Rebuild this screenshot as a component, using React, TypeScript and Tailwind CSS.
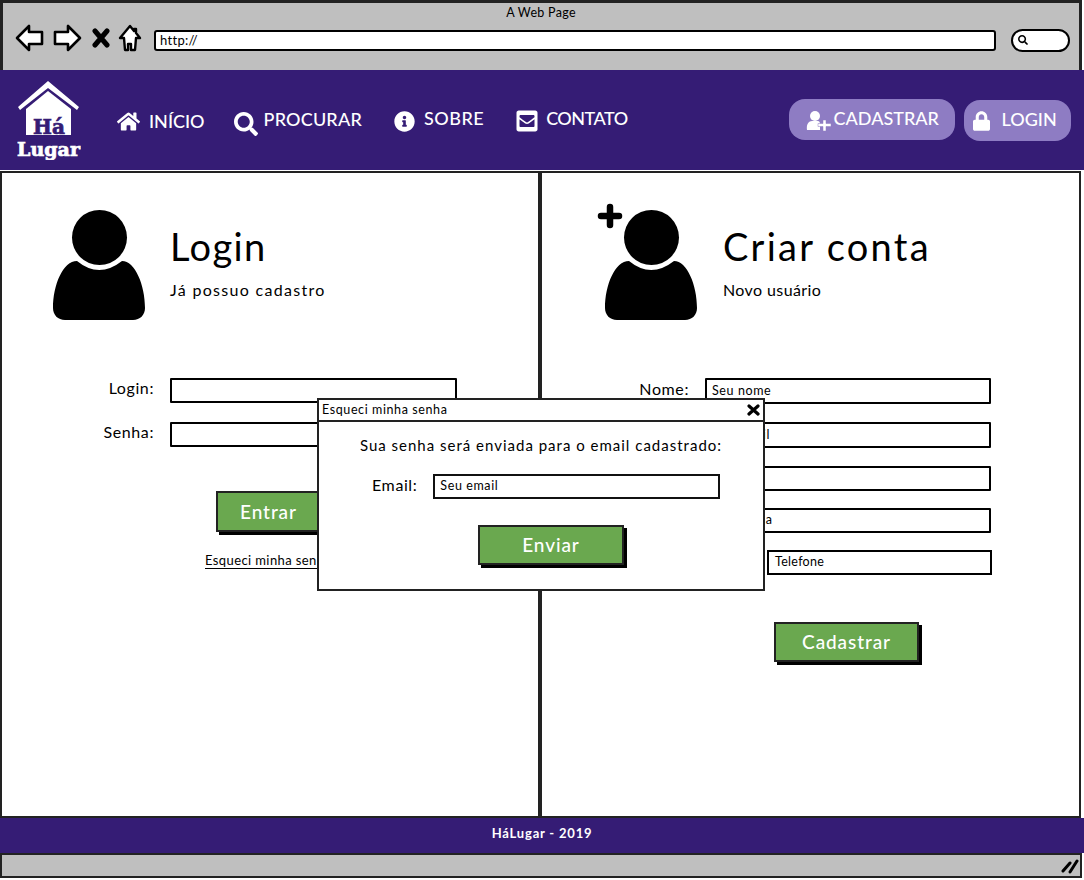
import { FaHome, FaSearch, FaInfoCircle, FaEnvelopeSquare, FaLock } from "react-icons/fa";

const font = "font-['Lato','Noto_Sans',sans-serif]";

function Person() {
  return (
    <svg width="92" height="110" viewBox="0 0 92 110" className="block">
      <circle cx="46.5" cy="27.5" r="27.5" fill="#000" />
      <path d="M24 51 Q46 69 69 51 C82 51 92 75 92 98 C92 105 87 110 80 110 L12 110 C5 110 0 105 0 98 C0 75 10 51 24 51 Z" fill="#000" />
    </svg>
  );
}

function Field({ label, placeholder, labelW, inputW, h = "h-[26px]", mt = "" }: { label?: string; placeholder?: string; labelW: string; inputW: string; h?: string; mt?: string }) {
  return (
    <div className={`flex items-center ${mt}`}>
      <div className={`${labelW} -mt-[5px] text-right text-[16px] leading-5 tracking-[0.6px] text-black`}>{label}</div>
      <div className={`ml-4 ${inputW} ${h} flex items-center border-2 border-black rounded-[1px] bg-white pl-[5px] text-[12.5px] tracking-[0.6px] text-black`}>{placeholder}</div>
    </div>
  );
}

function GreenButton({ children, cls }: { children: string; cls: string }) {
  return (
    <div className={`${cls} flex items-center justify-center border-2 border-[#222] bg-[#6aa84f] text-[19px] font-medium tracking-[0.9px] text-white shadow-[3px_3px_0_#000]`}>{children}</div>
  );
}

function NavItem({ icon, label, cls, textCls = "" }: { icon: React.ReactNode; label: string; cls: string; textCls?: string }) {
  return (
    <div className={`flex items-center text-[18px] font-medium text-white ${cls}`}>
      {icon}
      <span className={textCls}>{label}</span>
    </div>
  );
}

export default function App() {
  return (
    <div className={`relative h-[880px] w-[1084px] overflow-hidden bg-white ${font} text-black`}>
      {/* browser chrome */}
      <div className="h-[70px] w-[1082px] border-[3px] border-b-0 border-[#222] bg-[#bfbfbf]">
        <div className="pt-[2px] text-center text-[12.5px] leading-4 tracking-[0.3px]">A Web Page</div>
        <div className="mt-[3px] flex items-center pl-[12px]">
          <svg width="30" height="28" viewBox="0 0 30 28" fill="none" stroke="#000" strokeWidth="2.6" strokeLinejoin="round">
            <path d="M2 14 L14 2 L14 8 L27 8 L27 20 L14 20 L14 26 Z" fill="#fff" />
          </svg>
          <svg className="ml-[7px]" width="30" height="28" viewBox="0 0 30 28" fill="none" stroke="#000" strokeWidth="2.6" strokeLinejoin="round">
            <path d="M28 14 L16 2 L16 8 L3 8 L3 20 L16 20 L16 26 Z" fill="#fff" />
          </svg>
          <svg className="ml-[10px]" width="18" height="20" viewBox="0 0 18 20" fill="none" stroke="#000" strokeWidth="5" strokeLinecap="round">
            <path d="M3 3 L15 17 M15 3 L3 17" />
          </svg>
          <svg className="ml-[8px]" width="24" height="28" viewBox="0 0 24 28" fill="#fff" stroke="#000" strokeWidth="2.4" strokeLinejoin="round">
            <path d="M12 2 L16 7 L16 5 L18 5 L18 9 L22 14 L18 14 L17 26 L13 26 L13 20 L10 20 L10 26 L7 26 L6 14 L2 14 Z" />
          </svg>
          <div className="ml-[12px] mt-[5px] flex h-[21px] w-[842px] items-center rounded-[3px] border-2 border-black bg-white pl-[4px] text-[13px] leading-none tracking-[0.3px]">http://</div>
          <div className="ml-[15px] mt-[4px] flex h-[23px] w-[59px] items-center rounded-full border-2 border-black bg-white pl-[5px]">
            <FaSearch className="h-[10px] w-[10px]" />
          </div>
        </div>
      </div>

      {/* header */}
      <div className="flex h-[100px] w-[1084px] items-start bg-[#351c75]">
        <svg className="ml-[17px] mt-[10px] shrink-0" width="64" height="80" viewBox="0 0 64 80">
          <path d="M1 27 L31 1 L62 27 L60 30 L31 8 L3 30 Z" fill="#fff" />
          <path d="M9 29 L31 11 L54 29 L54 55 L9 55 Z" fill="#fff" />
          <text x="32" y="54" textAnchor="middle" fontFamily="'DejaVu Serif','Liberation Serif',serif" fontWeight="900" fontSize="20" fill="#351c75" stroke="#351c75" strokeWidth="0.7">Há</text>
          <text x="31.5" y="76" textAnchor="middle" fontFamily="'DejaVu Serif','Liberation Serif',serif" fontWeight="900" fontSize="19" fill="#fff" stroke="#fff" strokeWidth="0.7">Lugar</text>
        </svg>
        <NavItem cls="ml-[36px] mt-[38px]" icon={<FaHome className="mr-[9px] h-[21px] w-[23px]" />} label="INÍCIO" />
        <NavItem cls="ml-[29px] mt-[33px]" icon={<FaSearch className="mr-[6px] mt-[9px] h-[24px] w-[24px]" />} label="PROCURAR" textCls="tracking-[0.2px]" />
        <NavItem cls="ml-[32px] mt-[35px]" icon={<FaInfoCircle className="mr-[9px] mt-[5px] h-[21px] w-[21px]" />} label="SOBRE" textCls="tracking-[0.5px]" />
        <NavItem cls="ml-[32px] mt-[33px]" icon={<FaEnvelopeSquare className="mr-[8px] mt-[6px] h-[24px] w-[22px]" />} label="CONTATO" textCls="tracking-[-0.5px]" />
        <div className="ml-[161px] mt-[29px] flex h-[41px] w-[166px] items-center rounded-[16px] bg-[#8e7cc3] pl-[17px] text-[18px] font-medium text-white">
          <svg width="25" height="20" viewBox="0 0 25 20" fill="#fff" className="mr-[3px] mt-[3px]">
            <circle cx="9" cy="5" r="5" />
            <path d="M1 19 C0 13 3 10 6 10 L12 10 C13 10 14 11 14 13 L14 19 Z" />
            <path d="M17 9 H20 V12.5 H25 V15.5 H20 V20 H17 V15.5 H12 V12.5 H17 Z" stroke="#8e7cc3" strokeWidth="0.5" />
          </svg>
          <span className="-mt-[3px]">CADASTRAR</span>
        </div>
        <div className="ml-[9px] mt-[30px] flex h-[41px] w-[107px] items-center rounded-[16px] bg-[#8e7cc3] pl-[9px] text-[18px] font-medium text-white">
          <FaLock className="mr-[12px] h-[20px] w-[17px]" />
          <span className="-mt-[3px]">LOGIN</span>
        </div>
      </div>

      {/* panels */}
      <div className="mt-px flex h-[647px] w-[1081px]">
        <div className="h-full w-[540px] border-2 border-[#222] pl-[51px] pt-[37px]">
          <div className="flex">
            <Person />
            <div className="ml-[25px] pt-[12px]">
              <div className="text-[38px] leading-[48px] tracking-[1.4px]">Login</div>
              <div className="mt-[10px] text-[16px] leading-5 tracking-[1.3px]">Já possuo cadastro</div>
            </div>
          </div>
          <Field mt="mt-[58px]" label="Login:" labelW="w-[101px]" inputW="w-[287px]" h="h-[25px]" />
          <Field mt="mt-[19px]" label="Senha:" labelW="w-[101px]" inputW="w-[287px]" h="h-[25px]" />
          <GreenButton cls="ml-[163px] mt-[44px] h-[41px] w-[105px] pt-[1px]">Entrar</GreenButton>
          <div className="ml-[152px] mt-[20px] w-[170px] border-b border-black text-[13px] leading-[16px] tracking-[0.4px] whitespace-nowrap">Esqueci minha senha</div>
        </div>
        <div className="h-full w-[541px] border-2 border-[#222] pl-[63px] pt-[37px]">
          <div className="flex">
            <div className="relative">
              <Person />
              <svg className="absolute -left-[8px] -top-[7px]" width="26" height="26" viewBox="0 0 26 26" stroke="#000" strokeWidth="6.5" strokeLinecap="round">
                <path d="M13 4 V22 M4 13 H22" />
              </svg>
            </div>
            <div className="ml-[26px] pt-[12px]">
              <div className="text-[38px] leading-[48px] tracking-[2.3px]">Criar conta</div>
              <div className="mt-[10px] text-[16px] leading-5 tracking-[0.4px]">Novo usuário</div>
            </div>
          </div>
          <Field mt="mt-[58px]" label="Nome:" placeholder="Seu nome" labelW="w-[84px]" inputW="w-[286px]" />
          <Field mt="mt-[18px]" placeholder="Seu email" labelW="w-[84px]" inputW="w-[286px]" />
          <Field mt="mt-[18px]" labelW="w-[84px]" inputW="w-[286px]" h="h-[25px]" />
          <Field mt="mt-[17px]" placeholder="Sua senha" labelW="w-[84px]" inputW="w-[286px]" h="h-[25px]" />
          <div className="mt-[17px] flex h-[25px] items-center">
            <div className="w-[84px]" />
            <div className="ml-[78px] flex h-[25px] w-[225px] items-center border-2 border-black bg-white pl-[6px] text-[12.5px] tracking-[0.3px]">Telefone</div>
          </div>
          <GreenButton cls="ml-[169px] mt-[47px] h-[40px] w-[145px]">Cadastrar</GreenButton>
        </div>
      </div>

      {/* footer */}
      <div className="flex h-[35px] w-[1084px] items-center justify-center bg-[#351c75] pb-[4px] text-[13px] font-bold tracking-[0.8px] text-white">HáLugar - 2019</div>
      <div className="flex h-[25px] w-[1082px] items-center justify-end border-[2px] border-[#222] bg-[#bfbfbf] pr-[1px]">
        <svg width="18" height="16" viewBox="0 0 18 16" stroke="#000" strokeWidth="3" strokeLinecap="round">
          <path d="M2 13 L9 5 M9 14 L16 3" />
        </svg>
      </div>

      {/* dialog */}
      <div className="absolute left-[317px] top-[398px] h-[193px] w-[448px] border-2 border-[#222] bg-white">
        <div className="flex h-[22px] items-center justify-between border-b-2 border-[#222] pl-[3px] pr-[3px] text-[12.5px] tracking-[0.6px]">
          <span>Esqueci minha senha</span>
          <svg width="13" height="12" viewBox="0 0 13 12" stroke="#000" strokeWidth="3.2" strokeLinecap="round">
            <path d="M2 2 L11 10 M11 2 L2 10" />
          </svg>
        </div>
        <div className="mt-[13px] text-center text-[15px] leading-5 tracking-[1px]">Sua senha será enviada para o email cadastrado:</div>
        <div className="mt-[19px] flex items-center pl-[53px]">
          <span className="-mt-[4px] text-[16px] tracking-[0.6px]">Email:</span>
          <div className="ml-[16px] flex h-[25px] w-[287px] items-center border-2 border-[#111] bg-white pl-[5px] text-[12.5px] tracking-[0.6px]">Seu email</div>
        </div>
        <GreenButton cls="ml-[159px] mt-[26px] h-[40px] w-[146px]">Enviar</GreenButton>
      </div>
    </div>
  );
}
